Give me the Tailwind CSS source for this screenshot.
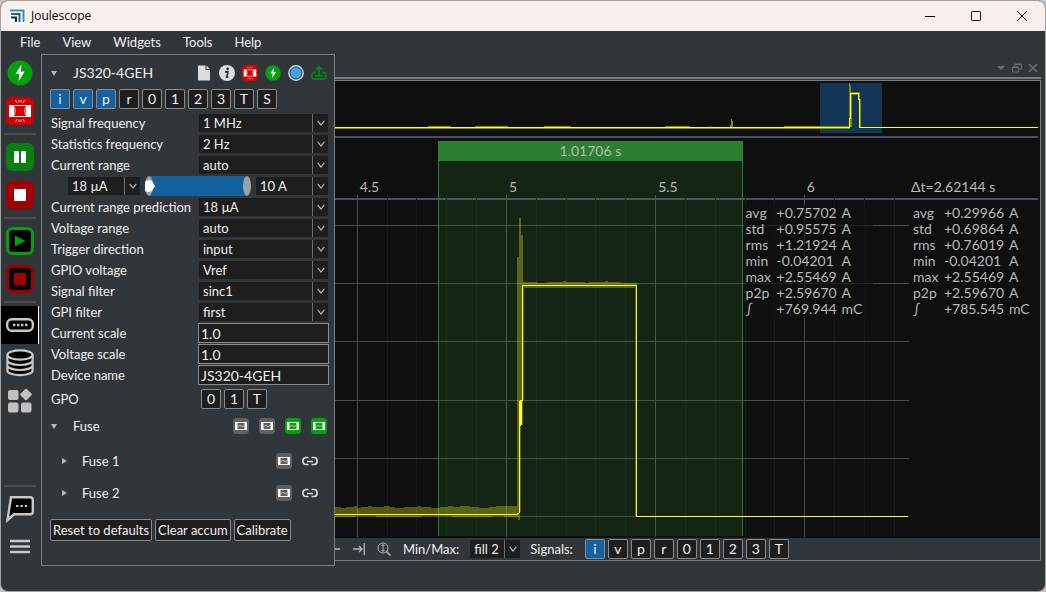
<!DOCTYPE html>
<html lang="en">
<head>
  <meta charset="UTF-8" />
  <meta name="viewport" content="width=device-width, initial-scale=1.0"/>
  <title>Joulescope</title>
  <script src="https://cdn.jsdelivr.net/npm/@tailwindcss/browser@4"></script>
</head>
<body class="bg-[#c4c4c4] font-['Lato',sans-serif] text-[13px] leading-4 text-[#eff0f1]">

  <!-- shared icons -->
  <svg class="hidden">
    <symbol id="chevron" viewBox="0 0 8 6"><path d="M0.7 0.8 L4 5 L7.3 0.8" fill="none" stroke="#b8b8b8" stroke-width="1.1"/></symbol>
    <symbol id="fuse" viewBox="0 0 16 16">
      <rect width="16" height="16" rx="3.5" fill="currentColor"/>
      <path d="M2 4h2.500v8H2zM11.500 4H14v8h-2.500z" fill="#fff"/>
      <path d="M4 4.500h8M4 11.500h8" stroke="#fff" stroke-width=".900"/>
      <path d="M5 8.600q1.500-2 3-.600t3-.600" fill="none" stroke="#fff" stroke-width=".600"/>
    </symbol>
    <symbol id="fuse-blown" viewBox="0 0 28 28">
      <rect width="28" height="28" rx="6" fill="#d40000"/>
      <path d="M3 8h5v12H3zM20 8h5v12h-5z" fill="#fff"/>
      <path d="M7 8.500h14M7 19.500h14" stroke="#fff" stroke-width="1"/>
      <path d="M8.500 10q1.500 4 0 8M19.500 10q-1.500 4 0 8" stroke="#fff" stroke-width=".800" fill="none"/>
      <path d="M9.500 3l1.500 3M13 3v2.500M15 3v2.500M18.500 3L17 6M9.500 25l1.500-3M13 25v-2.500M15 25v-2.500M18.500 25L17 22" stroke="#fff" stroke-width=".700"/>
    </symbol>
    <symbol id="power" viewBox="0 0 26 26">
      <circle cx="13" cy="13" r="12.500" fill="#04a010"/>
      <path d="M14.500 4.500L8.500 14h4l-1 7.500L17.700 11.500h-4z" fill="#fff"/>
    </symbol>
    <symbol id="link" viewBox="0 0 16 10">
      <path d="M6.500 1.500H4a3 3 0 0 0-3 3v1a3 3 0 0 0 3 3h2.500M9.500 1.500H12a3 3 0 0 1 3 3v1a3 3 0 0 1-3 3H9.500M5 5.500h6" fill="none" stroke="#dcdcdc" stroke-width="1.700"/>
    </symbol>
  </svg>

  <div class="min-h-screen flex flex-col rounded-lg border border-[#a3a3a3] bg-[#31363a] overflow-hidden">

    <!-- title bar -->
    <header class="h-[30px] shrink-0 flex items-center bg-[#f8efed] text-black pl-2 font-['Open_Sans',sans-serif] text-[12px]">
      <svg class="w-4 h-4" viewBox="0 0 16 16">
        <rect width="16" height="16" rx="2" fill="#fff"/>
        <path d="M1 2.500h13.500V14" fill="none" stroke="#2e93ad" stroke-width="2"/>
        <path d="M2 6h8.500v8" fill="none" stroke="#1f5e86" stroke-width="2"/>
        <path d="M2 9.500h5V14" fill="none" stroke="#15213f" stroke-width="2"/>
      </svg>
      <h1 class="flex-1 pl-[6px]">Joulescope</h1>
      <button class="w-[46px] h-full flex items-center justify-center" aria-label="Minimize"><svg class="w-3 h-3" viewBox="0 0 12 12"><path d="M1 6.500h10" stroke="#000"/></svg></button>
      <button class="w-[46px] h-full flex items-center justify-center" aria-label="Maximize"><svg class="w-3 h-3" viewBox="0 0 12 12"><rect x="1.500" y="1.500" width="9" height="9" rx="1" fill="none" stroke="#000"/></svg></button>
      <button class="w-[46px] h-full flex items-center justify-center" aria-label="Close"><svg class="w-3 h-3" viewBox="0 0 12 12"><path d="M1 1l10 10M11 1L1 11" stroke="#000"/></svg></button>
    </header>

    <!-- menu -->
    <nav class="h-[23px] shrink-0 flex items-center gap-[22px] pl-[19px] pb-px">
      <a href="#file">File</a>
      <a href="#view">View</a>
      <a href="#widgets">Widgets</a>
      <a href="#tools">Tools</a>
      <a href="#help">Help</a>
    </nav>

    <main class="flex-1 flex pb-[25px]">

      <!-- sidebar -->
      <aside class="w-[38px] shrink-0 flex flex-col mr-[2px]">
        <button class="h-[38px] flex items-center justify-center" aria-label="Power"><svg class="w-[26px] h-[26px]"><use href="#power"/></svg></button>
        <button class="h-[38px] flex items-center justify-center" aria-label="Fuse reset"><svg class="w-7 h-7"><use href="#fuse-blown"/></svg></button>
        <hr class="my-[3px] mx-[3px] border-t-2 border-[#4e4e4e]">
        <button class="h-[38px] flex items-center justify-center" aria-label="Pause">
          <svg class="w-7 h-7" viewBox="0 0 28 28"><rect width="28" height="28" rx="6" fill="#048010"/><rect x="8" y="8" width="5" height="12" rx="1" fill="#fff"/><rect x="15" y="8" width="5" height="12" rx="1" fill="#fff"/></svg>
        </button>
        <button class="h-[38px] flex items-center justify-center" aria-label="Stop">
          <svg class="w-7 h-7" viewBox="0 0 28 28"><rect width="28" height="28" rx="6" fill="#a00000"/><rect x="8" y="8" width="12" height="12" rx="1" fill="#fff"/></svg>
        </button>
        <hr class="my-[3px] mx-[3px] border-t-2 border-[#4e4e4e]">
        <button class="h-[38px] flex items-center justify-center" aria-label="Record">
          <svg class="w-7 h-7" viewBox="0 0 28 28"><rect x="1.500" y="1.500" width="25" height="25" rx="5" fill="#000" stroke="#04a010" stroke-width="3"/><path d="M9 8.500L19.500 14L9 19.500z" fill="#04a010"/></svg>
        </button>
        <button class="h-[38px] flex items-center justify-center" aria-label="Record statistics">
          <svg class="w-7 h-7" viewBox="0 0 28 28"><rect x="1.500" y="1.500" width="25" height="25" rx="5" fill="#000" stroke="#a00000" stroke-width="3"/><rect x="8" y="8" width="12" height="12" rx="1" fill="#a00000"/></svg>
        </button>
        <hr class="my-[3px] mx-[3px] border-t-2 border-[#4e4e4e]">
        <button class="h-[38px] flex items-center justify-center bg-black border-r border-white" aria-label="Device">
          <svg class="w-7 h-4" viewBox="0 0 28 16"><rect x="1.200" y="2.200" width="25.600" height="11.600" rx="4.500" fill="#000" stroke="#c8c8c8" stroke-width="2.400"/><path d="M7 8h14.500" stroke="#c8c8c8" stroke-width="2.400" stroke-dasharray="2.400 1.600"/></svg>
        </button>
        <button class="h-[38px] flex items-center justify-center" aria-label="Memory">
          <svg class="w-7 h-7" viewBox="0 0 28 28"><path d="M1.200 6v16c0 2.800 5.500 5 12.800 5s12.800-2.200 12.800-5V6" fill="#000"/><g fill="none" stroke="#c8c8c8" stroke-width="2.200"><ellipse cx="14" cy="6" rx="12.600" ry="4.600" fill="#000"/><path d="M1.400 6v5.300c0 2.600 5.500 4.700 12.600 4.700s12.600-2.100 12.600-4.700V6M1.400 11v5.300C1.400 18.900 7 21 14 21s12.600-2.100 12.600-4.700V11M1.400 16v5.500c0 2.600 5.500 4.700 12.600 4.700s12.600-2.100 12.600-4.700V16"/></g></svg>
        </button>
        <button class="h-[38px] flex items-center justify-center" aria-label="Widgets">
          <svg class="w-6 h-6" viewBox="0 0 24 24" fill="#c0c0c0"><rect y="1" width="10.500" height="10" rx="2"/><rect y="13.500" width="10.500" height="10" rx="2"/><rect x="13" y="13.500" width="10.500" height="10" rx="2"/><rect x="13.500" y="1" width="9" height="9" rx="1.500" transform="rotate(45 18 5.500)"/></svg>
        </button>
        <div class="flex-1"></div>
        <hr class="my-[3px] mx-[3px] border-t-2 border-[#4e4e4e]">
        <button class="h-[38px] flex items-center justify-center" aria-label="Help">
          <svg class="w-7 h-7" viewBox="0 0 28 28"><path d="M5 2.200h19a2.800 2.800 0 0 1 2.800 2.800v11.500a2.800 2.800 0 0 1-2.800 2.800H8L1.500 25z" fill="#000" stroke="#c8c8c8" stroke-width="2.400"/><path d="M10 11h12" stroke="#c8c8c8" stroke-width="2.200" stroke-dasharray="2.400 2"/></svg>
        </button>
        <button class="h-[38px] flex items-center justify-center" aria-label="Menu">
          <svg class="w-5 h-4" viewBox="0 0 20 16"><path d="M1 2h18M1 7.500h18M1 13h18" stroke="#c8c8c8" stroke-width="2.600" stroke-linecap="round"/></svg>
        </button>
      </aside>

      <!-- device control panel -->
      <section class="w-[294px] shrink-0 flex flex-col border border-[#7a7e80] pt-[6px] pb-6 pl-2 pr-[7px]">
        <div class="h-6 flex items-center gap-[7px]">
          <button class="pl-px flex" aria-label="Collapse device"><svg class="w-[6px] h-[5px]" viewBox="0 0 6 5"><path d="M0 0h6L3 5z" fill="#b8b8b8"/></svg></button>
          <h2 class="flex-1 pl-[9px] text-[14px]">JS320-4GEH</h2>
          <svg class="w-4 h-4" viewBox="0 0 16 16"><path d="M2 .500h7.500V5H14v10.500H2zM10.500.500L14 4h-3.500z" fill="#dcdcdc"/></svg>
          <svg class="w-4 h-4" viewBox="0 0 16 16"><circle cx="8" cy="8" r="8" fill="#dcdcdc"/><circle cx="8.700" cy="3.800" r="1.400" fill="#31363a"/><path d="M6 6.800h3l-1.300 5.400h1.600" fill="none" stroke="#31363a" stroke-width="1.700"/></svg>
          <svg class="w-4 h-4"><use href="#fuse-blown"/></svg>
          <svg class="w-4 h-4"><use href="#power"/></svg>
          <svg class="w-4 h-4" viewBox="0 0 16 16"><circle cx="8" cy="8" r="7.200" fill="#3ba0ee" stroke="#dcdcdc" stroke-width="1.400"/><circle cx="8" cy="8" r="6" fill="none" stroke="#31363a" stroke-width=".800"/></svg>
          <svg class="w-4 h-4" viewBox="0 0 16 16" fill="none" stroke="#048c10" stroke-width="1.500"><path d="M5 7.500H3a2 2 0 0 0-2 2V12a2 2 0 0 0 2 2h10a2 2 0 0 0 2-2V9.500a2 2 0 0 0-2-2h-2M4 11h8M8 11V2M4.800 4.800L8 1.500l3.200 3.300"/></svg>
        </div>

        <div class="mt-1 flex gap-[3px] text-[14px] *:w-5 *:h-5 *:rounded-xs *:border *:border-[#8a8c8e] *:leading-4">
          <button class="bg-[#15609f]">i</button>
          <button class="bg-[#15609f]">v</button>
          <button class="bg-[#15609f]">p</button>
          <button class="bg-[#1e1e1e]">r</button>
          <button class="bg-[#1e1e1e]">0</button>
          <button class="bg-[#1e1e1e]">1</button>
          <button class="bg-[#1e1e1e]">2</button>
          <button class="bg-[#1e1e1e]">3</button>
          <button class="bg-[#1e1e1e]">T</button>
          <button class="bg-[#1e1e1e]">S</button>
        </div>

        <form class="mt-[5px] flex flex-col gap-[3px] pl-px">
          <div class="h-[18px] flex items-center">
            <label class="flex-1" for="signal-frequency">Signal frequency</label>
            <div class="relative w-[129px] mr-[-1px]">
              <select id="signal-frequency" class="block w-full h-[18px] pl-1 appearance-none bg-[#1e1e1e]"><option>1 MHz</option></select>
              <span class="absolute inset-y-0 right-0 w-4 border-l border-[#6c6e70] flex items-center justify-center pointer-events-none"><svg class="w-2 h-[6px]"><use href="#chevron"/></svg></span>
            </div>
          </div>
          <div class="h-[18px] flex items-center">
            <label class="flex-1" for="statistics-frequency">Statistics frequency</label>
            <div class="relative w-[129px] mr-[-1px]">
              <select id="statistics-frequency" class="block w-full h-[18px] pl-1 appearance-none bg-[#1e1e1e]"><option>2 Hz</option></select>
              <span class="absolute inset-y-0 right-0 w-4 border-l border-[#6c6e70] flex items-center justify-center pointer-events-none"><svg class="w-2 h-[6px]"><use href="#chevron"/></svg></span>
            </div>
          </div>
          <div class="h-[18px] flex items-center">
            <label class="flex-1" for="current-range">Current range</label>
            <div class="relative w-[129px] mr-[-1px]">
              <select id="current-range" class="block w-full h-[18px] pl-1 appearance-none bg-[#1e1e1e]"><option>auto</option></select>
              <span class="absolute inset-y-0 right-0 w-4 border-l border-[#6c6e70] flex items-center justify-center pointer-events-none"><svg class="w-2 h-[6px]"><use href="#chevron"/></svg></span>
            </div>
          </div>

          <!-- current range limits -->
          <div class="h-[18px] flex items-center gap-[5px] pl-[17px]">
            <div class="relative w-[72px]">
              <select aria-label="Minimum current range" class="block w-full h-[18px] pl-1 appearance-none bg-[#1e1e1e]"><option>18 µA</option></select>
              <span class="absolute inset-y-0 right-0 w-4 border-l border-[#6c6e70] flex items-center justify-center pointer-events-none"><svg class="w-2 h-[6px]"><use href="#chevron"/></svg></span>
            </div>
            <div class="relative flex-1 h-5">
              <svg class="w-full h-5" viewBox="0 0 106 20" preserveAspectRatio="none">
                <rect x="4" width="98" height="20" fill="#15609f"/>
                <ellipse cx="4" cy="10" rx="4" ry="10" fill="#a0a0a0"/>
                <ellipse cx="102" cy="10" rx="4" ry="10" fill="#a0a0a0"/>
                <path d="M0 5.500Q3 3.500 7 5L10 10L7 15Q3 17 0 15z" fill="#fff"/>
              </svg>
              <input type="range" min="0" max="5" value="0" aria-label="Minimum" class="absolute inset-y-0 left-0 w-1/2 opacity-0">
              <input type="range" min="0" max="5" value="5" aria-label="Maximum" class="absolute inset-y-0 right-0 w-1/2 opacity-0">
            </div>
            <div class="relative w-[72px] mr-[-1px]">
              <select aria-label="Maximum current range" class="block w-full h-[18px] pl-1 appearance-none bg-[#1e1e1e]"><option>10 A</option></select>
              <span class="absolute inset-y-0 right-0 w-4 border-l border-[#6c6e70] flex items-center justify-center pointer-events-none"><svg class="w-2 h-[6px]"><use href="#chevron"/></svg></span>
            </div>
          </div>

          <div class="h-[18px] flex items-center">
            <label class="flex-1 whitespace-nowrap" for="range-prediction">Current range prediction</label>
            <div class="relative w-[129px] mr-[-1px]">
              <select id="range-prediction" class="block w-full h-[18px] pl-1 appearance-none bg-[#1e1e1e]"><option>18 µA</option></select>
              <span class="absolute inset-y-0 right-0 w-4 border-l border-[#6c6e70] flex items-center justify-center pointer-events-none"><svg class="w-2 h-[6px]"><use href="#chevron"/></svg></span>
            </div>
          </div>
          <div class="h-[18px] flex items-center">
            <label class="flex-1" for="voltage-range">Voltage range</label>
            <div class="relative w-[129px] mr-[-1px]">
              <select id="voltage-range" class="block w-full h-[18px] pl-1 appearance-none bg-[#1e1e1e]"><option>auto</option></select>
              <span class="absolute inset-y-0 right-0 w-4 border-l border-[#6c6e70] flex items-center justify-center pointer-events-none"><svg class="w-2 h-[6px]"><use href="#chevron"/></svg></span>
            </div>
          </div>
          <div class="h-[18px] flex items-center">
            <label class="flex-1" for="trigger-direction">Trigger direction</label>
            <div class="relative w-[129px] mr-[-1px]">
              <select id="trigger-direction" class="block w-full h-[18px] pl-1 appearance-none bg-[#1e1e1e]"><option>input</option></select>
              <span class="absolute inset-y-0 right-0 w-4 border-l border-[#6c6e70] flex items-center justify-center pointer-events-none"><svg class="w-2 h-[6px]"><use href="#chevron"/></svg></span>
            </div>
          </div>
          <div class="h-[18px] flex items-center">
            <label class="flex-1" for="gpio-voltage">GPIO voltage</label>
            <div class="relative w-[129px] mr-[-1px]">
              <select id="gpio-voltage" class="block w-full h-[18px] pl-1 appearance-none bg-[#1e1e1e]"><option>Vref</option></select>
              <span class="absolute inset-y-0 right-0 w-4 border-l border-[#6c6e70] flex items-center justify-center pointer-events-none"><svg class="w-2 h-[6px]"><use href="#chevron"/></svg></span>
            </div>
          </div>
          <div class="h-[18px] flex items-center">
            <label class="flex-1" for="signal-filter">Signal filter</label>
            <div class="relative w-[129px] mr-[-1px]">
              <select id="signal-filter" class="block w-full h-[18px] pl-1 appearance-none bg-[#1e1e1e]"><option>sinc1</option></select>
              <span class="absolute inset-y-0 right-0 w-4 border-l border-[#6c6e70] flex items-center justify-center pointer-events-none"><svg class="w-2 h-[6px]"><use href="#chevron"/></svg></span>
            </div>
          </div>
          <div class="h-[18px] flex items-center">
            <label class="flex-1" for="gpi-filter">GPI filter</label>
            <div class="relative w-[129px] mr-[-1px]">
              <select id="gpi-filter" class="block w-full h-[18px] pl-1 appearance-none bg-[#1e1e1e]"><option>first</option></select>
              <span class="absolute inset-y-0 right-0 w-4 border-l border-[#6c6e70] flex items-center justify-center pointer-events-none"><svg class="w-2 h-[6px]"><use href="#chevron"/></svg></span>
            </div>
          </div>

          <div class="h-[18px] flex items-center">
            <label class="flex-1" for="current-scale">Current scale</label>
            <input id="current-scale" type="text" value="1.0" class="w-[131px] h-5 mr-[-2px] px-[2px] border border-[#8a8c8e] bg-[#1e1e1e] text-[14px]">
          </div>
          <div class="h-[18px] flex items-center">
            <label class="flex-1" for="voltage-scale">Voltage scale</label>
            <input id="voltage-scale" type="text" value="1.0" class="w-[131px] h-5 mr-[-2px] px-[2px] border border-[#8a8c8e] bg-[#1e1e1e] text-[14px]">
          </div>
          <div class="h-[18px] flex items-center">
            <label class="flex-1" for="device-name">Device name</label>
            <input id="device-name" type="text" value="JS320-4GEH" class="w-[131px] h-5 mr-[-2px] px-[2px] border border-[#8a8c8e] bg-[#1e1e1e] text-[14px]">
          </div>
        </form>

        <div class="mt-[5px] pl-px flex items-center">
          <span class="w-[150px]">GPO</span>
          <div class="flex gap-[3px] text-[14px] *:w-5 *:h-5 *:rounded-xs *:border *:border-[#8a8c8e] *:bg-[#1e1e1e] *:leading-4">
            <button>0</button>
            <button>1</button>
            <button>T</button>
          </div>
        </div>

        <!-- fuses -->
        <div class="mt-[7px] h-5 flex items-center gap-[10px]">
          <button class="pl-px flex" aria-label="Collapse fuses"><svg class="w-[6px] h-[5px]" viewBox="0 0 6 5"><path d="M0 0h6L3 5z" fill="#b8b8b8"/></svg></button>
          <h3 class="flex-1 pl-[6px]">Fuse</h3>
          <svg class="w-4 h-4 text-[#606060]"><use href="#fuse"/></svg>
          <svg class="w-4 h-4 text-[#606060]"><use href="#fuse"/></svg>
          <svg class="w-4 h-4 text-[#04a010]"><use href="#fuse"/></svg>
          <svg class="w-4 h-4 text-[#04a010]"><use href="#fuse"/></svg>
        </div>
        <div class="mt-[15px] h-5 flex items-center gap-[10px] pl-3 pr-[9px]">
          <button class="flex" aria-label="Expand fuse 1"><svg class="w-[5px] h-[6px]" viewBox="0 0 5 6"><path d="M0 0v6L5 3z" fill="#b8b8b8"/></svg></button>
          <h4 class="flex-1 pl-[5px]">Fuse 1</h4>
          <svg class="w-4 h-4 text-[#606060]"><use href="#fuse"/></svg>
          <svg class="w-4 h-[10px]"><use href="#link"/></svg>
        </div>
        <div class="mt-3 h-5 flex items-center gap-[10px] pl-3 pr-[9px]">
          <button class="flex" aria-label="Expand fuse 2"><svg class="w-[5px] h-[6px]" viewBox="0 0 5 6"><path d="M0 0v6L5 3z" fill="#b8b8b8"/></svg></button>
          <h4 class="flex-1 pl-[5px]">Fuse 2</h4>
          <svg class="w-4 h-4 text-[#606060]"><use href="#fuse"/></svg>
          <svg class="w-4 h-[10px]"><use href="#link"/></svg>
        </div>

        <div class="mt-4 flex gap-[3px] *:h-[22px] *:px-[2px] *:rounded-xs *:border *:border-[#8a8c8e] *:bg-[#1e1e1e] *:whitespace-nowrap">
          <button>Reset to defaults</button>
          <button>Clear accum</button>
          <button>Calibrate</button>
        </div>
      </section>

      <!-- waveform dock -->
      <section class="flex-1 min-w-0 flex flex-col pr-1 mb-[5px]">
        <div class="h-[23px] flex items-center justify-end gap-1 pt-[5px] pr-[2px]">
          <button class="w-3 flex justify-center" aria-label="Dock menu"><svg class="w-2 h-1" viewBox="0 0 8 4"><path d="M0 0h8L4 4z" fill="#6e6e6e"/></svg></button>
          <button class="w-3 flex justify-center" aria-label="Detach"><svg class="w-[10px] h-[10px]" viewBox="0 0 10 10" fill="none" stroke="#6e6e6e"><path d="M3 3V1h6.500v5H7M3 1.500h6.500M.500 4h6v5h-6zM.500 4.500h6"/></svg></button>
          <button class="w-3 flex justify-center" aria-label="Close dock"><svg class="w-[10px] h-[10px]" viewBox="0 0 10 10"><path d="M1 1l8 8M9 1L1 9" stroke="#6e6e6e" stroke-width="1.600"/></svg></button>
        </div>
        <div class="h-[2px] mb-px bg-[#7a7e80]"></div>

        <div class="flex-1 flex flex-col border border-l-0 border-[#7a7e80] bg-[#0f0f0f] text-[14px] text-[#b8b8b8]">
          <!-- overview -->
          <div class="h-[57px] mr-[2px] border-b-2 border-[#4d4b6b]">
            <svg class="w-full h-[55px]" viewBox="335 81 703 55" preserveAspectRatio="none" shape-rendering="crispEdges">
              <rect x="820" y="83" width="62" height="50" fill="#113656"/>
              <g fill="#85851a">
                <path d="M335 128h515v1H335zM428 126h23v1h-23zM475 126h33v1h-33zM544 126h27v1h-27zM665 126h25v1h-25zM710 126h1v1h-1zM784 126h66v1h-66z"/>
                <path d="M730 127v-2h1v-6h1v2h1v6zM849 127V83h1v2h1v7h9v7h1v28h-2V95h-7v32z"/>
              </g>
              <path d="M335 127.500H849.500V118h1V93.500H858.500V99h1V127.500H1038" fill="none" stroke="#ffff1a"/>
            </svg>
          </div>

          <!-- signal plot -->
          <div class="flex-1 flex relative">
            <div class="absolute left-0 right-[2px] top-[60px] h-[2px] bg-[#4d4b6b]"></div>
            <div class="flex-1 relative">
              <svg class="absolute inset-0 w-full h-full" viewBox="335 138 574 400" preserveAspectRatio="none" shape-rendering="crispEdges">
                <path d="M387.500 195V536M416.500 195V536M446.500 195V536M476.500 195V536M536.500 195V536M566.500 195V536M595.500 195V536M625.500 195V536M685.500 195V536M715.500 195V536M745.500 195V536M774.500 195V536M834.500 195V536M864.500 195V536M894.500 195V536" stroke="#1a1a1a"/>
                <path d="M357.500 195V537M506.500 195V537M655.500 195V537M804.500 195V537M335 225.500H909M335 283.500H909M335 341.500H909M335 400.500H909M335 458.500H909M335 516.500H909" stroke="#4b4b4b"/>
              </svg>

              <!-- time markers, 1.01706 s apart -->
              <div class="absolute top-[3px] bottom-[2px] border-x border-[#2d7f30] bg-[#2d8a30]/18" style="left:18%;width:53%">
                <div class="h-5 bg-[#2d7f30] text-center leading-5">1.01706 s</div>
                <div class="absolute left-full top-[64px] h-[113px] w-[129px] ml-[2px] bg-[#0f0f0f]/70">
                  <table class="text-left leading-4 whitespace-nowrap">
                    <tr><td class="w-[31px] pl-[2px]">avg</td><td class="w-[65px] pl-[2px]">+0.75702</td><td class="pl-[2px]">A</td></tr>
                    <tr><td class="pl-[2px]">std</td><td class="pl-[2px]">+0.95575</td><td class="pl-[2px]">A</td></tr>
                    <tr><td class="pl-[2px]">rms</td><td class="pl-[2px]">+1.21924</td><td class="pl-[2px]">A</td></tr>
                    <tr><td class="pl-[2px]">min</td><td class="pl-[2px]">-0.04201</td><td class="pl-[2px]">A</td></tr>
                    <tr><td class="pl-[2px]">max</td><td class="pl-[2px]">+2.55469</td><td class="pl-[2px]">A</td></tr>
                    <tr><td class="pl-[2px]">p2p</td><td class="pl-[2px]">+2.59670</td><td class="pl-[2px]">A</td></tr>
                    <tr><td class="pl-[2px]">∫</td><td class="pl-[2px]">+769.944</td><td class="pl-[2px]">mC</td></tr>
                  </table>
                </div>
              </div>

              <!-- time axis -->
              <span class="absolute top-[41px]" style="left:4.3%">4.5</span>
              <span class="absolute top-[41px]" style="left:30.3%">5</span>
              <span class="absolute top-[41px]" style="left:56.3%">5.5</span>
              <span class="absolute top-[41px]" style="left:82.2%">6</span>

              <svg class="absolute inset-0 w-full h-full pointer-events-none" viewBox="335 138 574 400" preserveAspectRatio="none" shape-rendering="crispEdges">
                <path d="M335 507h6v1h5v-1h8v-1h3v2h4v-1h7v-1h4v1h12v-1h6v1h5v1h9v-1h14v-1h3v1h10v1h9v-1h8v-1h5v1h7v-1h10v1h9v1h10v-1h7v-1H517V257H519V218H521V235H523V282h14v1h10v-1h16v-1h3v1h19v1h4v-1h16v-1h3v1h13v1H637V516H635V288H524V400H523V425H521V512H520V520H518V517h-14v-1h-12v1h-40v-1h-30v1h-46v-1h-20v1H335z" fill="#ffff1a" fill-opacity=".3"/>
                <path d="M335 514.500H517L519.500 512.500V425.500H520.500V400.500H522.500V285.500H636.500V516.500H908" fill="none" stroke="#ffff1a"/>
                <rect x="519" y="401" width="3" height="24" fill="#ffff1a"/>
              </svg>
            </div>

            <!-- full view statistics -->
            <div class="w-[131px] pt-[41px] pl-[2px]">
              <p>Δt=2.62144 s</p>
              <table class="mt-[10px] text-left leading-4 whitespace-nowrap">
                <tr><td class="w-[31px] pl-[2px]">avg</td><td class="w-[65px] pl-[2px]">+0.29966</td><td class="pl-[2px]">A</td></tr>
                <tr><td class="pl-[2px]">std</td><td class="pl-[2px]">+0.69864</td><td class="pl-[2px]">A</td></tr>
                <tr><td class="pl-[2px]">rms</td><td class="pl-[2px]">+0.76019</td><td class="pl-[2px]">A</td></tr>
                <tr><td class="pl-[2px]">min</td><td class="pl-[2px]">-0.04201</td><td class="pl-[2px]">A</td></tr>
                <tr><td class="pl-[2px]">max</td><td class="pl-[2px]">+2.55469</td><td class="pl-[2px]">A</td></tr>
                <tr><td class="pl-[2px]">p2p</td><td class="pl-[2px]">+2.59670</td><td class="pl-[2px]">A</td></tr>
                <tr><td class="pl-[2px]">∫</td><td class="pl-[2px]">+785.545</td><td class="pl-[2px]">mC</td></tr>
              </table>
            </div>
          </div>

          <!-- plot toolbar -->
          <div class="h-[22px] flex items-center bg-[#31363a] text-[13px] text-[#eff0f1]">
            <button aria-label="Go to start"><svg class="w-[6px] h-3" viewBox="0 0 6 12"><path d="M0 6h5" stroke="#b8b8b8" stroke-width="1.500"/></svg></button>
            <button class="ml-3" aria-label="Go to end"><svg class="w-3 h-[14px]" viewBox="0 0 12 14"><path d="M0 7h9M6 4l3 3-3 3M11.300 1v12" fill="none" stroke="#b8b8b8" stroke-width="1.300"/></svg></button>
            <button class="ml-3" aria-label="Zoom Y"><svg class="w-[14px] h-[14px]" viewBox="0 0 14 14" fill="none" stroke="#b8b8b8"><circle cx="6" cy="6" r="5"/><path d="M9.600 9.600L13.500 13.500" stroke-width="1.500"/><path d="M6 2.500v7M4.500 4L6 2.500 7.500 4M4.500 8L6 9.500 7.500 8"/></svg></button>
            <label class="ml-3" for="min-max">Min/Max:</label>
            <div class="relative ml-[11px] w-[50px]">
              <select id="min-max" class="block w-full h-[18px] pl-1 appearance-none bg-[#1e1e1e]"><option>fill 2</option></select>
              <span class="absolute inset-y-0 right-0 w-4 border-l border-[#6c6e70] flex items-center justify-center pointer-events-none"><svg class="w-2 h-[6px]"><use href="#chevron"/></svg></span>
            </div>
            <span class="ml-[10px]">Signals:</span>
            <div class="ml-3 flex gap-[3px] text-[14px] *:w-5 *:h-5 *:rounded-xs *:border *:border-[#8a8c8e] *:leading-4">
              <button class="bg-[#15609f]">i</button>
              <button class="bg-[#1e1e1e]">v</button>
              <button class="bg-[#1e1e1e]">p</button>
              <button class="bg-[#1e1e1e]">r</button>
              <button class="bg-[#1e1e1e]">0</button>
              <button class="bg-[#1e1e1e]">1</button>
              <button class="bg-[#1e1e1e]">2</button>
              <button class="bg-[#1e1e1e]">3</button>
              <button class="bg-[#1e1e1e]">T</button>
            </div>
          </div>
        </div>
      </section>
    </main>
  </div>
</body>
</html>
